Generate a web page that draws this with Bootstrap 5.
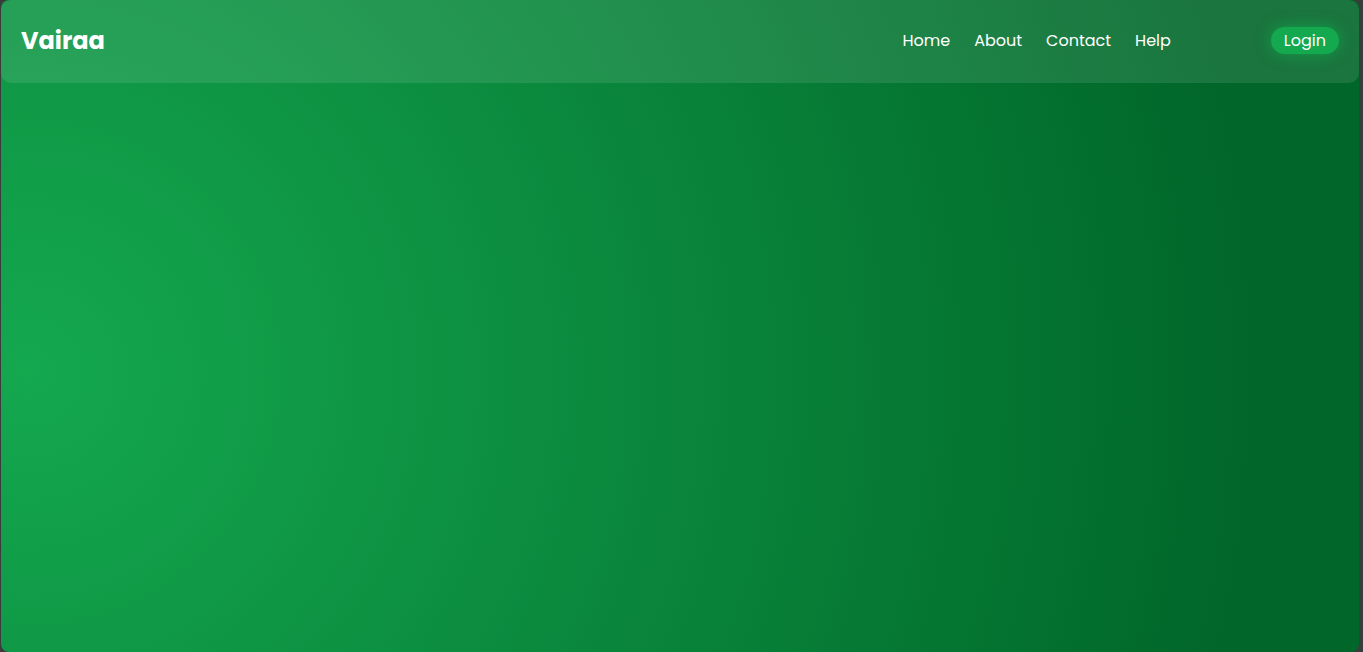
<!DOCTYPE html>
<html lang="en">
<head>
<meta charset="utf-8">
<meta name="viewport" content="width=device-width, initial-scale=1">
<title>Vairaa</title>
<link href="https://cdn.jsdelivr.net/npm/bootstrap@5.3.0/dist/css/bootstrap.min.css" rel="stylesheet">
<style>
  body { background: #3b3b3b; font-family: Poppins, "Open Sans", "Noto Sans", sans-serif; }
  .page-shell {
    border-radius: 8px;
    margin: 0 4px 0 1px;
    background: radial-gradient(circle at 2% 57%, #14a84f 0%, #006629 90%);
  }
  .top-bar {
    background: rgba(255, 255, 255, .1);
    border-radius: 10px;
    padding: 20px 20px 22px;
    min-height: 83px;
  }
  .top-bar .navbar-brand { font-size: 24px; font-weight: 700; }
  .menu { gap: 24px; margin-right: 100px; }
  .top-bar .menu .nav-link { font-size: 16px; padding: 0; color: #fff; }
  .login-btn {
    background: #14a84f; color: #fff; border: 0; border-radius: 20px;
    font-size: 16px; line-height: 27px; padding: 0 13px;
    box-shadow: 0 0 15px rgba(20, 168, 79, .8);
  }
</style>
</head>
<body>
<div class="page-shell min-vh-100 overflow-hidden">
  <nav class="top-bar navbar navbar-expand navbar-dark">
    <a class="navbar-brand m-0 p-0 text-white" href="#">Vairaa</a>
    <ul class="menu navbar-nav ms-auto">
      <li class="nav-item"><a class="nav-link" href="#">Home</a></li>
      <li class="nav-item"><a class="nav-link" href="#">About</a></li>
      <li class="nav-item"><a class="nav-link" href="#">Contact</a></li>
      <li class="nav-item"><a class="nav-link" href="#">Help</a></li>
    </ul>
    <button class="login-btn" type="button">Login</button>
  </nav>
</div>
<script src="https://cdn.jsdelivr.net/npm/bootstrap@5.3.0/dist/js/bootstrap.bundle.min.js"></script>
</body>
</html>
